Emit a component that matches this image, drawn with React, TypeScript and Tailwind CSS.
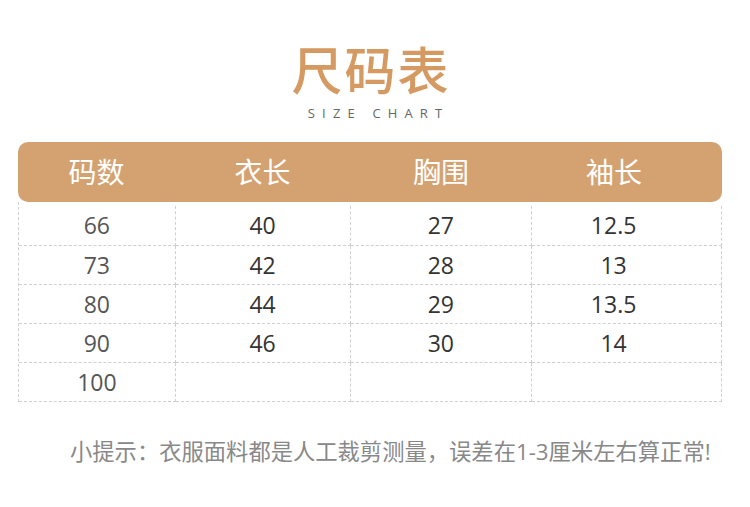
import React from "react";

const headers = ["码数", "衣长", "胸围", "袖长"];

const rows: string[][] = [
  ["66", "40", "27", "12.5"],
  ["73", "42", "28", "13"],
  ["80", "44", "29", "13.5"],
  ["90", "46", "30", "14"],
  ["100", "", "", ""],
];

const colWidths = ["w-[157px]", "w-[175px]", "w-[182px]", "w-[190px] pr-[26px]"];

const App: React.FC = () => {
  return (
    <div
      className="w-[750px] h-[507px] bg-white overflow-hidden"
      style={{ fontFamily: '"Open Sans", "Noto Sans CJK SC", sans-serif' }}
    >
      {/* Title */}
      <div className="pt-[44px] pr-[8px] flex flex-col items-center">
        <h1 className="text-[51px] leading-[52px] font-medium text-[#d49a62] tracking-[2px]">
          尺码表
        </h1>
        <p className="mt-[10px] ml-[8px] text-[13px] leading-[14px] tracking-[0.55em] pl-[0.55em] text-[#666]">
          SIZE CHART
        </p>
      </div>

      {/* Table */}
      <div className="ml-[18px] mt-[22px] w-[704px]">
        <div className="flex h-[60px] rounded-[10px] bg-[#d4a271] text-white">
          {headers.map((h, i) => (
            <div
              key={h}
              className={`${colWidths[i]} flex items-center justify-center text-[28px]`}
            >
              {h}
            </div>
          ))}
        </div>
        <div className="border-l border-dashed border-[#cfcfcf]">
          {rows.map((row, ri) => (
            <div
              key={ri}
              className={`flex ${ri === 0 ? "h-[44px] pt-[4px]" : "h-[39px]"}`}
            >
              {row.map((cell, ci) => (
                <div
                  key={ci}
                  className={`${colWidths[ci]} flex items-center justify-center border-r border-b border-dashed border-[#cfcfcf] text-[23px] ${
                    ci === 0 ? "text-[#555]" : "text-[#333]"
                  }`}
                >
                  {cell}
                </div>
              ))}
            </div>
          ))}
        </div>
      </div>

      {/* Note */}
      <p className="mt-[38px] pl-[70px] text-[22.3px] leading-[24px] text-[#888]">
        小提示：衣服面料都是人工裁剪测量，误差在1-3厘米左右算正常!
      </p>
    </div>
  );
};

export default App;
